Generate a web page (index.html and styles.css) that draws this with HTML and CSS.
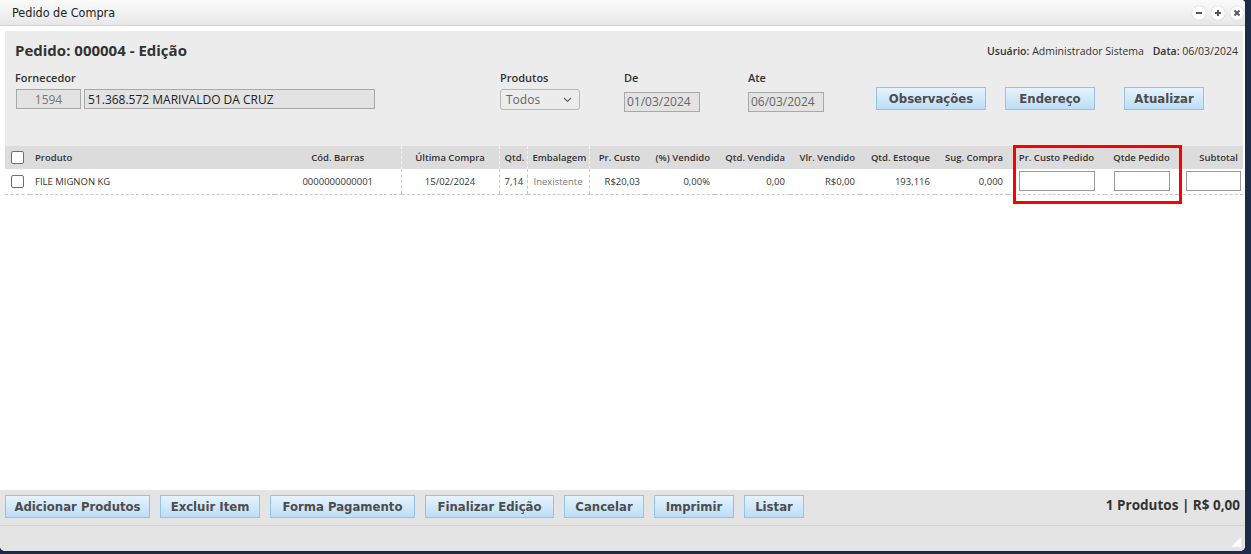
FILE: index.html
```html
<!DOCTYPE html>
<html lang="pt-BR">
<head>
    <meta charset="UTF-8">
    <title>Pedido de Compra</title>
    <link rel="stylesheet" href="styles.css">
</head>
<body>

<div class="window">
    <div class="titlebar">
        <span class="title">Pedido de Compra</span>
        <div class="win-btns">
            <span class="win-btn">
                <svg width="8" height="8" viewBox="0 0 8 8"><path d="M1 4h6" stroke="#555" stroke-width="2"/></svg>
            </span>
            <span class="win-btn">
                <svg width="8" height="8" viewBox="0 0 8 8"><path d="M1 4h6M4 1v6" stroke="#555" stroke-width="2"/></svg>
            </span>
            <span class="win-btn">
                <svg width="8" height="8" viewBox="0 0 8 8"><path d="M1.5 1.5l5 5M6.5 1.5l-5 5" stroke="#555" stroke-width="1.8"/></svg>
            </span>
        </div>
    </div>

    <div class="content">
        <div class="panel">
            <div class="panel-top">
                <h1>Pedido: 000004 - Edição</h1>
                <div class="user-info">
                    <b>Usuário:</b> Administrador Sistema <b class="data">Data:</b> 06/03/2024
                </div>
            </div>

            <div class="filters">
                <div class="field f-fornecedor">
                    <label>Fornecedor</label>
                    <div class="inputs">
                        <input class="inp inp-code" type="text" value="1594" readonly>
                        <input class="inp inp-name" type="text" value="51.368.572 MARIVALDO DA CRUZ" readonly>
                    </div>
                </div>
                <div class="field f-produtos">
                    <label>Produtos</label>
                    <div class="select">
                        <span>Todos</span>
                        <svg width="9" height="6" viewBox="0 0 9 6"><path d="M1 1l3.5 3.5L8 1" fill="none" stroke="#666" stroke-width="1.2"/></svg>
                    </div>
                </div>
                <div class="field f-de">
                    <label>De</label>
                    <input class="inp inp-date" type="text" value="01/03/2024" readonly>
                </div>
                <div class="field f-ate">
                    <label>Ate</label>
                    <input class="inp inp-date" type="text" value="06/03/2024" readonly>
                </div>
                <div class="top-actions">
                    <button class="btn btn-obs">Observações</button>
                    <button class="btn btn-end">Endereço</button>
                    <button class="btn btn-atu">Atualizar</button>
                </div>
            </div>
        </div>

        <div class="grid-wrap">
            <table class="grid">
                <colgroup>
                    <col style="width:25px"><col style="width:245px"><col style="width:126px">
                    <col style="width:98px"><col style="width:28px"><col style="width:62px">
                    <col style="width:56px"><col style="width:70px"><col style="width:75px">
                    <col style="width:70px"><col style="width:75px"><col style="width:73px">
                    <col style="width:97px"><col style="width:73px"><col style="width:65px">
                </colgroup>
                <thead>
                <tr>
                    <th class="chk"><span class="box"></span></th>
                    <th class="left">Produto</th>
                    <th>Cód. Barras</th>
                    <th class="sep">Última Compra</th>
                    <th class="sep">Qtd.</th>
                    <th class="sep">Embalagem</th>
                    <th class="sep right">Pr. Custo</th>
                    <th class="right">(%) Vendido</th>
                    <th class="right">Qtd. Vendida</th>
                    <th class="right">Vlr. Vendido</th>
                    <th class="right">Qtd. Estoque</th>
                    <th class="right">Sug. Compra</th>
                    <th>Pr. Custo Pedido</th>
                    <th>Qtde Pedido</th>
                    <th class="right">Subtotal</th>
                </tr>
                </thead>
                <tbody>
                <tr>
                    <td class="chk"><span class="box"></span></td>
                    <td class="left">FILE MIGNON KG</td>
                    <td>0000000000001</td>
                    <td class="sep">15/02/2024</td>
                    <td class="sep">7,14</td>
                    <td class="sep muted">Inexistente</td>
                    <td class="sep right">R$20,03</td>
                    <td class="right">0,00%</td>
                    <td class="right">0,00</td>
                    <td class="right">R$0,00</td>
                    <td class="right">193,116</td>
                    <td class="right">0,000</td>
                    <td><input class="cell-inp w-custo" type="text"></td>
                    <td><input class="cell-inp w-qtde" type="text"></td>
                    <td class="right"><input class="cell-inp w-sub" type="text"></td>
                </tr>
                </tbody>
            </table>
            <div class="highlight"></div>
        </div>
    </div>

    <div class="footer">
        <div class="footer-btns">
            <button class="btn b-add">Adicionar Produtos</button>
            <button class="btn b-exc">Excluir Item</button>
            <button class="btn b-pag">Forma Pagamento</button>
            <button class="btn b-fin">Finalizar Edição</button>
            <button class="btn b-can">Cancelar</button>
            <button class="btn b-imp">Imprimir</button>
            <button class="btn b-lis">Listar</button>
        </div>
        <div class="total">1 Produtos | R$ 0,00</div>
    </div>
    <div class="statusbar">
        <svg class="grip" width="10" height="10" viewBox="0 0 10 10"><path d="M10 0v10H0z" fill="#fafafa"/></svg>
    </div>
</div>

</body>
</html>
```

FILE: styles.css
```css
* {
    box-sizing: border-box;
}
html, body {
    margin: 0;
    height: 100%;
}
body {
    background: #1c2b48;
    font-family: "Open Sans", "Noto Sans", sans-serif;
    color: #333;
    overflow: hidden;
}
.window {
    width: 1245px;
    height: 551px;
    background: #fff;
    border-radius: 0 4px 5px 5px;
    display: flex;
    flex-direction: column;
    overflow: hidden;
}

/* title bar */
.titlebar {
    height: 26px;
    flex: none;
    background: linear-gradient(#fbfbfb, #e7e7e7);
    border-bottom: 1px solid #d2d2d2;
    display: flex;
    align-items: center;
    justify-content: space-between;
    padding: 0 1px 0 12px;
}
.title {
    font-family: "DejaVu Sans Condensed", "DejaVu Sans", sans-serif;
    font-size: 12.5px;
    color: #222;
}
.win-btns {
    display: flex;
    gap: 5px;
}
.win-btn {
    width: 14px;
    height: 14px;
    border-radius: 50%;
    background: #fff;
    box-shadow: 0 0 1px rgba(0,0,0,0.3);
    display: flex;
    align-items: center;
    justify-content: center;
}

.content {
    flex: 1;
    padding: 5px 2px 0 5px;
    display: flex;
    flex-direction: column;
}

/* top panel */
.panel {
    background: #ececec;
    height: 115px;
    padding: 9px 5px 0 10px;
    flex: none;
}
.panel-top {
    display: flex;
    justify-content: space-between;
    align-items: center;
    height: 20px;
}
.panel-top h1 {
    margin: 0;
    font-size: 15px;
    font-weight: 700;
    color: #333;
}
.user-info {
    font-size: 10.5px;
    color: #333;
    padding-top: 1px;
}
.user-info b {
    font-weight: 600;
}
.user-info .data {
    margin-left: 6px;
}
.filters {
    display: flex;
    margin-top: 11px;
}
.field label {
    display: block;
    font-size: 11px;
    font-weight: 600;
    line-height: 14px;
    margin-bottom: 4px;
}
.f-fornecedor { width: 485px; }
.f-produtos { width: 124px; }
.f-de { width: 124px; }
.f-ate { width: 128px; }
.inputs {
    display: flex;
    gap: 3px;
    padding-left: 1px;
}
.inp {
    height: 20px;
    border: 1px solid #a8a8a8;
    background: #e3e3e3;
    font-family: "Open Sans", sans-serif;
    font-size: 12px;
    padding: 0 3px;
    color: #222;
    outline: none;
}
.inp-code {
    width: 65px;
    text-align: center;
    color: #777;
}
.inp-name {
    width: 291px;
}
.inp-date {
    width: 76px;
    color: #666;
    padding: 0 2px;
}
.select {
    width: 80px;
    height: 21px;
    border: 1px solid #b8b8b8;
    border-radius: 3px;
    background: #ececec;
    display: flex;
    align-items: center;
    justify-content: space-between;
    padding: 0 7px 0 5px;
    font-size: 12px;
    color: #666;
}
.top-actions {
    display: flex;
    padding-top: 16px;
}
.btn-end { margin-left: 19px; }
.btn-atu { margin-left: 29px; }
.btn-obs { width: 110px; }
.btn-end { width: 90px; }
.btn-atu { width: 80px; }

/* buttons */
.btn {
    height: 23px;
    border: 1px solid #92c3ea;
    background: linear-gradient(#e6f3fd, #bcdef7);
    font-family: "DejaVu Sans Condensed", "DejaVu Sans", sans-serif;
    font-weight: 700;
    font-size: 13px;
    color: #4d4d4d;
    padding: 0;
    cursor: pointer;
}
.b-add { width: 145px; }
.b-exc { width: 100px; }
.b-pag { width: 145px; }
.b-fin { width: 129px; }
.b-can { width: 80px; }
.b-imp { width: 80px; }
.b-lis { width: 60px; }

/* grid */
.grid-wrap {
    position: relative;
    flex: 1;
}
.grid {
    width: 1238px;
    border-collapse: collapse;
    table-layout: fixed;
    font-size: 9.5px;
}
.grid th {
    background: #dcdcdc;
    height: 23px;
    font-weight: 600;
    color: #333;
    text-align: center;
    padding: 0 5px;
    white-space: nowrap;
}
.grid td {
    height: 25px;
    text-align: center;
    padding: 0 5px;
    border-bottom: 1px dashed #c8c8c8;
    white-space: nowrap;
    color: #333;
}
.grid .left { text-align: left; }
.grid .right { text-align: right; }
.grid .sep { border-left: 1px dashed #c8c8c8; }
.grid th.sep { border-left-color: #f4f4f4; }
.grid .muted { color: #777; }
.grid .chk {
    padding: 0 0 0 6px;
    text-align: left;
}
.box {
    display: block;
    width: 13px;
    height: 13px;
    border: 1.5px solid #6f6f6f;
    border-radius: 2px;
    background: #fff;
}
.cell-inp {
    height: 20px;
    border: 1px solid #9a9a9a;
    background: #fff;
    display: block;
    margin: 0 auto;
    outline: none;
}
.w-custo { width: 76px; }
.w-qtde { width: 56px; }
.w-sub { width: 55px; margin: 0 -3px 0 auto; }
.highlight {
    position: absolute;
    left: 1008px;
    top: -1px;
    width: 169px;
    height: 59px;
    border: 3px solid #f00;
}

/* footer */
.footer {
    height: 36px;
    flex: none;
    background: #e4e4e4;
    border-bottom: 1px solid #d3d3d3;
    display: flex;
    align-items: center;
    justify-content: space-between;
    padding: 0 5px 2px 5px;
}
.footer-btns {
    display: flex;
    gap: 10px;
}
.total {
    font-size: 13.5px;
    font-weight: 700;
    color: #333;
    margin-top: -3px;
}
.statusbar {
    height: 25px;
    flex: none;
    background: #e4e4e4;
    position: relative;
}
.grip {
    position: absolute;
    right: 4px;
    bottom: 4px;
}
```
